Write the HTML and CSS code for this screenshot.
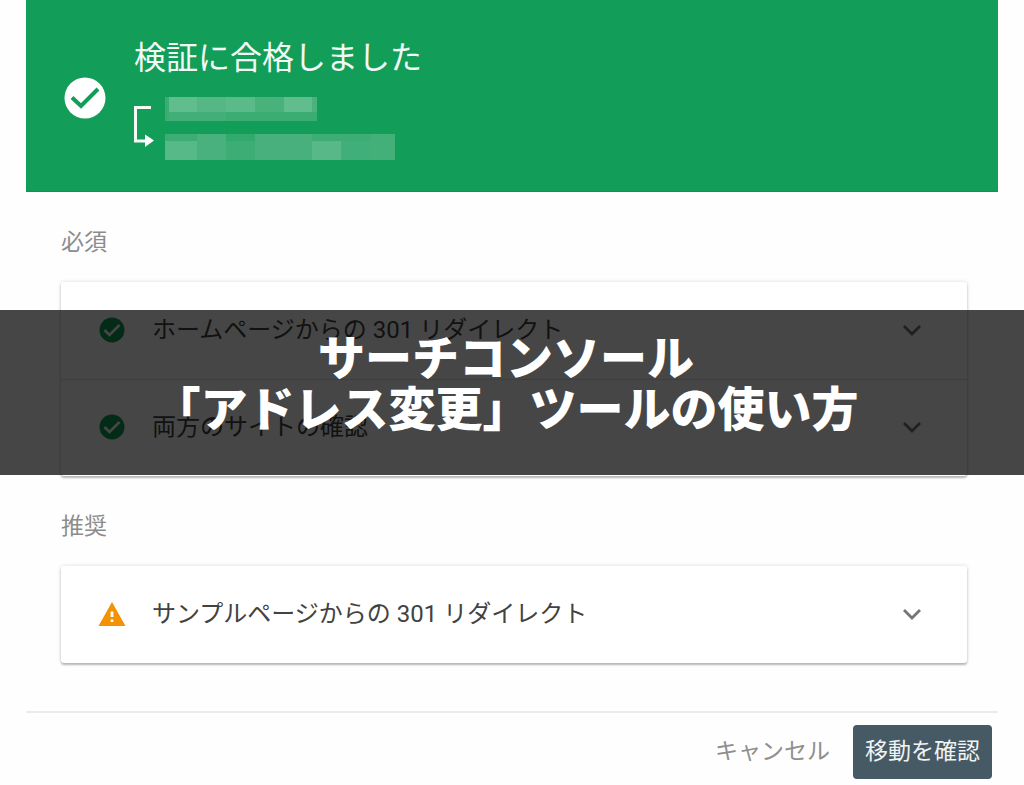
FILE: index.html
```html
<!DOCTYPE html>
<html lang="ja">
<head>
<meta charset="utf-8">
<title>サーチコンソール「アドレス変更」ツールの使い方</title>
<link rel="stylesheet" href="styles.css">
</head>
<body>
<div class="page">
  <main class="dialog">
    <header class="result">
      <svg class="result-icon" viewBox="0 0 42 42" aria-hidden="true">
        <circle cx="21" cy="21" r="20.5" fill="#fff"/>
        <path d="M8 20.500L17 29L34 12" fill="none" stroke="#129e59" stroke-width="4"/>
      </svg>
      <div class="result-body">
        <h1 class="result-title">検証に合格しました</h1>
        <svg class="sites" viewBox="0 0 262 64" aria-hidden="true">
          <path d="M17 10.500H1.500V44H13" fill="none" stroke="#f4fbf7" stroke-width="3"/>
          <path d="M11 37.500L20 43.500L11 50Z" fill="#fff"/>
          <g shape-rendering="crispEdges">
            <path d="M31 0H183V24H31Z" fill="#3bad73"/>
            <path d="M35 0H63V15H35Z" fill="#60bd8d"/>
            <path d="M63 0H92V15H63Z" fill="#56b786"/>
            <path d="M92 0H121V15H92Z" fill="#5bba89"/>
            <path d="M121 0H150V15H121Z" fill="#49b17c"/>
            <path d="M150 0H178V15H150Z" fill="#61bc8e"/>
            <path d="M178 0H183V15H178Z" fill="#4bb27e"/>
            <path d="M35 15H92V24H35Z" fill="#42af78"/>
            <path d="M31 37H261V63H31Z" fill="#3dad75"/>
            <path d="M31 44H63V63H31Z" fill="#58b988"/>
            <path d="M63 37H92V63H63Z" fill="#49b17d"/>
            <path d="M92 37H121V44H92Z" fill="#32a96d"/>
            <path d="M121 37H178V63H121Z" fill="#48b07c"/>
            <path d="M178 44H207V63H178Z" fill="#58b888"/>
            <path d="M207 44H236V63H207Z" fill="#41af79"/>
            <path d="M236 37H261V63H236Z" fill="#43af79"/>
          </g>
        </svg>
      </div>
    </header>

    <div class="checks">
      <section class="group">
        <h2 class="group-title">必須</h2>
        <div class="card">
          <button class="row" type="button">
            <svg class="status" viewBox="0 0 28 28" aria-hidden="true">
              <circle cx="14" cy="14" r="12.500" fill="#129e59"/>
              <path d="M6.500 14L11.500 19L21.500 9" fill="none" stroke="#fff" stroke-width="2.600"/>
            </svg>
            <span class="row-label">ホームページからの 301 リダイレクト</span>
            <svg class="chevron" viewBox="0 0 20 14" aria-hidden="true"><path d="M2 3L10 11L18 3" fill="none" stroke="#757575" stroke-width="2.800"/></svg>
          </button>
          <button class="row" type="button">
            <svg class="status" viewBox="0 0 28 28" aria-hidden="true">
              <circle cx="14" cy="14" r="12.500" fill="#129e59"/>
              <path d="M6.500 14L11.500 19L21.500 9" fill="none" stroke="#fff" stroke-width="2.600"/>
            </svg>
            <span class="row-label">両方のサイトの確認</span>
            <svg class="chevron" viewBox="0 0 20 14" aria-hidden="true"><path d="M2 3L10 11L18 3" fill="none" stroke="#757575" stroke-width="2.800"/></svg>
          </button>
        </div>
      </section>

      <section class="group">
        <h2 class="group-title">推奨</h2>
        <div class="card">
          <button class="row" type="button">
            <svg class="status" viewBox="0 0 28 28" aria-hidden="true">
              <path d="M14 2L27.500 26H0.500Z" fill="#f29204"/>
              <path d="M14 11.500V17M14 19.500V22" stroke="#fff" stroke-width="2.800"/>
            </svg>
            <span class="row-label">サンプルページからの 301 リダイレクト</span>
            <svg class="chevron" viewBox="0 0 20 14" aria-hidden="true"><path d="M2 3L10 11L18 3" fill="none" stroke="#757575" stroke-width="2.800"/></svg>
          </button>
        </div>
      </section>
    </div>

    <footer class="actions">
      <button class="btn" type="button">キャンセル</button>
      <button class="btn btn-primary" type="button">移動を確認</button>
    </footer>
  </main>

  <div class="banner">
    <p class="banner-text">サーチコンソール<br>「アドレス変更」ツールの使い方</p>
  </div>
</div>
</body>
</html>
```
FILE: styles.css
```css
* {
  box-sizing: border-box;
}

body {
  margin: 0;
  background: #fefefe;
  color: #424242;
  font-family: Roboto, "Noto Sans CJK JP", sans-serif;
}

h1, h2, p {
  margin: 0;
  font-weight: 400;
}

button {
  border: 0;
  background: none;
  color: inherit;
  font: inherit;
  cursor: pointer;
}

svg {
  display: block;
  flex: none;
}

.page {
  position: relative;
}

.dialog {
  margin: 0 26px;
}

.result {
  display: flex;
  align-items: center;
  gap: 28px;
  padding: 34px 38px 30px;
  background: #129e59;
  border-bottom: 1px solid #0b9650;
}

.result-icon {
  width: 42px;
  height: 42px;
}

.result-title {
  margin-bottom: 15px;
  color: #f2faf6;
  font-size: 32px;
  line-height: 48px;
}

.sites {
  width: 262px;
  height: 64px;
}

.checks {
  padding: 33px 31px 48px 35px;
}

.group + .group {
  margin-top: 33px;
}

.group-title {
  margin-bottom: 21px;
  color: #8c8c8c;
  font-size: 23px;
  line-height: 36px;
}

.card {
  background: #fff;
  border-radius: 3px;
  box-shadow: 0 2px 2px rgba(0, 0, 0, 0.24), 0 0 4px rgba(0, 0, 0, 0.14);
}

.row {
  display: flex;
  align-items: center;
  width: 100%;
  height: 97px;
  padding: 0 45px 2px 37px;
  text-align: left;
}

.row + .row {
  border-top: 1px solid #e2e2e2;
}

.status {
  width: 28px;
  height: 28px;
}

.row-label {
  flex: 1;
  margin-left: 26px;
  font-size: 24px;
  line-height: 36px;
}

.chevron {
  width: 20px;
  height: 14px;
}

.actions {
  display: flex;
  justify-content: flex-end;
  gap: 11px;
  padding: 12px 6px 6px;
  border-top: 2px solid #ebebeb;
}

.btn {
  height: 54px;
  padding: 0 12px;
  border-radius: 4px;
  color: #8f8f8f;
  font-size: 23px;
  line-height: 36px;
}

.btn-primary {
  background: #455a64;
  color: #f0f2f3;
}

.banner {
  position: absolute;
  top: 310px;
  left: 0;
  right: 0;
  padding: 19px 12px 44px 0;
  background: rgba(0, 0, 0, 0.725);
  pointer-events: none;
}

.banner-text {
  color: #fff;
  font-family: "Noto Sans CJK JP", sans-serif;
  font-size: 47px;
  font-weight: 900;
  line-height: 51px;
  text-align: center;
}
```
